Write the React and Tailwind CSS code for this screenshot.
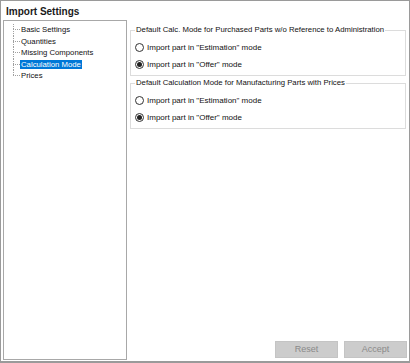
const treeItems = [
  { label: "Basic Settings" },
  { label: "Quantities" },
  { label: "Missing Components" },
  { label: "Calculation Mode", selected: true },
  { label: "Prices" },
];

const groups = [
  {
    title: "Default Calc. Mode for Purchased Parts w/o Reference to Administration",
    value: "offer",
  },
  {
    title: "Default Calculation Mode for Manufacturing Parts with Prices",
    value: "offer",
  },
];

function Radio({ checked, label }) {
  return (
    <div className="flex h-[17px] items-center gap-[3px]">
      <span className="flex h-[9px] w-[9px] items-center justify-center rounded-full border border-[#333] bg-white">
        {checked && <span className="h-[5px] w-[5px] rounded-full bg-[#222]" />}
      </span>
      <span>{label}</span>
    </div>
  );
}

function GroupBox({ title, value }) {
  return (
    <fieldset className="border border-[#dcdcdc] pl-[4px] pb-[2px]">
      <legend className="px-[1px] text-[7.75px] leading-[10px]">{title}</legend>
      <div className="pt-[4px]">
        <Radio checked={value === "estimation"} label='Import part in "Estimation" mode' />
        <Radio checked={value === "offer"} label='Import part in "Offer" mode' />
      </div>
    </fieldset>
  );
}

export default function App() {
  return (
    <div className="flex h-[363px] w-[410px] flex-col border border-b-2 border-[#9a9a9a] bg-white font-['Liberation_Sans',Arial,sans-serif] text-[8px] text-[#111]">
      <div className="h-[19px] pl-[5px] pt-[5px] text-[10px] font-bold leading-[12px] text-[#1a1a1a]">
        Import Settings
      </div>
      <div className="flex flex-1 pb-[1px]">
        <div className="ml-[2px] w-[124px] border border-[#a8a8a8] pl-[9px] pt-[3px]">
          {treeItems.map((item, i) => (
            <div key={item.label} className="flex h-[11.5px] items-stretch">
              <div className="flex w-[7px] flex-col">
                <div className="flex-1 border-l border-dotted border-[#a0a0a0]" />
                <div
                  className={
                    i === treeItems.length - 1
                      ? "flex-1 border-t border-dotted border-[#a0a0a0]"
                      : "flex-1 border-l border-t border-dotted border-[#a0a0a0]"
                  }
                />
              </div>
              <div className="flex items-center">
                <span
                  className={
                    item.selected
                      ? "bg-[#0078d7] px-[1px] text-[7.75px] leading-[9.5px] text-white"
                      : "px-[1px] text-[7.75px] leading-[9.5px]"
                  }
                >
                  {item.label}
                </span>
              </div>
            </div>
          ))}
        </div>
        <div className="ml-[3px] mr-[3px] flex flex-1 flex-col pt-[5px]">
          <div className="flex flex-col gap-[2px]">
            {groups.map((g) => (
              <GroupBox key={g.title} title={g.title} value={g.value} />
            ))}
          </div>
          <div className="mt-auto mb-[2px] flex justify-end gap-[6px]">
            <button
              disabled
              className="h-[17px] w-[63px] border border-[#c4c4c4] bg-[#cccccc] text-[9px] text-[#8a8a8a]"
            >
              Reset
            </button>
            <button
              disabled
              className="mr-[-1px] h-[17px] w-[63px] border border-[#c4c4c4] bg-[#cccccc] text-[9px] text-[#8a8a8a]"
            >
              Accept
            </button>
          </div>
        </div>
      </div>
    </div>
  );
}
